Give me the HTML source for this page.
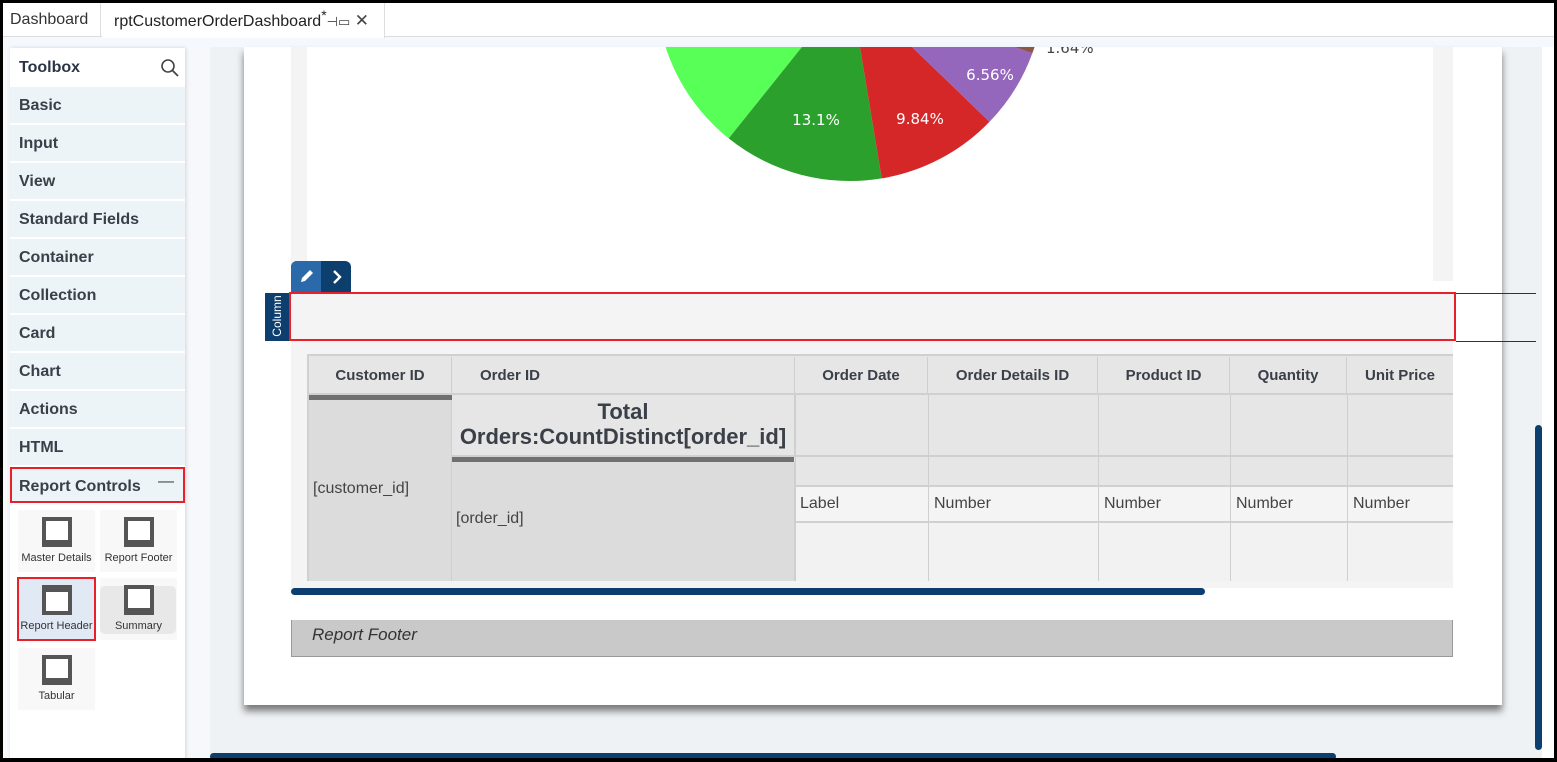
<!DOCTYPE html>
<html><head><meta charset="utf-8"><style>
*{box-sizing:border-box;margin:0;padding:0}
body{width:1557px;height:762px;overflow:hidden;background:#000;font-family:"Liberation Sans",sans-serif;position:relative}
.a{position:absolute}
#frame{left:3px;top:3px;width:1551px;height:755px;background:#f6f8fc;overflow:hidden}
.tabbar{left:0;top:0;width:1551px;height:34px;background:#fff;border-bottom:1px solid #dcdcdc}
.item{left:7px;width:175px;height:36px;background:#edf4f8;font-size:16px;font-weight:bold;color:#3a3f48;padding:10px 0 0 9px}
.tile{width:77px;height:62px;background:#f8f8f8;font-size:11px;color:#333;text-align:center}
.tile .ic{width:30px;height:30px;margin:7px auto 5px;background:#fff;border:4px solid #555;border-bottom-width:7px}
.th{font-size:15px;font-weight:bold;color:#3a3f48;text-align:center;line-height:38px;top:354px;height:38px;background:#e6e6e6;border-right:1px solid #cfcfcf;border-bottom:2px solid #d0d0d0}
.c{border-right:1px solid #cfcfcf;border-bottom:2px solid #d0d0d0}
.num{font-size:16px;color:#444;padding:8px 0 0 5px}
</style></head><body>
<div id="frame" class="a">
 <div class="a tabbar">
  <div class="a" style="left:0;top:0;width:98px;height:34px;border-right:1px solid #ddd;font-size:16px;color:#333;padding:8px 0 0 7px">Dashboard</div>
  <div class="a" style="left:99px;top:0;width:283px;height:35px;background:#fff;border-right:1px solid #ddd;font-size:16px;color:#222;padding:8px 0 0 12px">rptCustomerOrderDashboard<span style="position:relative;top:-6px;font-size:14px">*</span><span style="font-size:13px;color:#444">⊣▭</span> <span style="font-size:17px;color:#444">✕</span></div>
 </div>
 <div class="a" style="left:0;top:35px;width:1551px;height:9px;background:#f5f8fd"></div>
 <!-- sidebar -->
 <div class="a" style="left:7px;top:45px;width:175px;height:720px;background:#fff;box-shadow:1px 0 4px rgba(0,0,0,.15)"></div>
 <div class="a" style="left:16px;top:56px;font-size:16px;font-weight:bold;color:#2c3446">Toolbox</div>
 <svg class="a" style="left:157px;top:55px" width="20" height="20"><circle cx="8" cy="8" r="6" fill="none" stroke="#444" stroke-width="1.6"/><line x1="12.5" y1="12.5" x2="18" y2="18" stroke="#444" stroke-width="1.8"/></svg>
 <div class="a item" style="top:84px">Basic</div>
 <div class="a item" style="top:122px">Input</div>
 <div class="a item" style="top:160px">View</div>
 <div class="a item" style="top:198px">Standard Fields</div>
 <div class="a item" style="top:236px">Container</div>
 <div class="a item" style="top:274px">Collection</div>
 <div class="a item" style="top:312px">Card</div>
 <div class="a item" style="top:350px">Chart</div>
 <div class="a item" style="top:388px">Actions</div>
 <div class="a item" style="top:426px">HTML</div>
 <div class="a item" style="top:464px;height:36px;border:2px solid #e8202a;padding:9px 0 0 7px">Report Controls<span style="position:absolute;right:9px;top:4px;font-weight:normal">—</span></div>
 <div class="a tile" style="left:15px;top:507px"><div class="ic"></div>Master Details</div>
 <div class="a tile" style="left:97px;top:507px"><div class="ic"></div>Report Footer</div>
 <div class="a tile" style="left:15px;top:575px;background:#e1e9f5;border:2px solid #e8202a;width:79px;height:64px;margin:-1px 0 0 -1px"><div class="ic" style="margin-top:6px;border-width:7px 4px 4px"></div>Report Header</div>
 <div class="a tile" style="left:97px;top:575px"><div style="position:absolute;left:0;top:8px;width:76px;height:48px;background:#e8e8e8;border-radius:5px"></div><div class="ic" style="position:relative"></div><span style="position:relative">Summary</span></div>
 <div class="a tile" style="left:15px;top:645px"><div class="ic"></div>Tabular</div>
 <!-- canvas -->
 <div class="a" style="left:207px;top:44px;width:1332px;height:720px;background:#eef2f5"></div>
 <div class="a" style="left:1539px;top:44px;width:12px;height:720px;background:#fff"></div>
 <div class="a" style="left:241px;top:44px;width:1258px;height:658px;background:#fff;box-shadow:0 6px 7px rgba(0,0,0,.5)"></div>
 <div class="a" style="left:288px;top:44px;width:1162px;height:234px;background:#f4f4f4"></div>
 <div class="a" style="left:304px;top:44px;width:1126px;height:234px;background:#fff"></div>
 <svg class="a" style="left:0;top:44px;overflow:hidden" width="1200" height="200" viewBox="0 47 1200 200">
  <g transform="translate(-3,0)">
  <path d="M850 -13 L667.7 -79.4 A194 194 0 0 0 728.7 138.4 Z" fill="#57ff57"/>
  <path d="M850 -13 L728.7 138.4 A194 194 0 0 0 881.7 178.4 Z" fill="#2ca02c"/>
  <path d="M850 -13 L881.7 178.4 A194 194 0 0 0 989.5 121.8 Z" fill="#d62728"/>
  <path d="M850 -13 L989.5 121.8 A194 194 0 0 0 1032.3 53.4 Z" fill="#9467bd"/>
  <path d="M850 -13 L1032.3 53.4 A194 194 0 0 0 1040 28 Z" fill="#8c564b"/>
  <text x="816" y="125" fill="#fff" font-size="15" text-anchor="middle" font-family="DejaVu Sans">13.1%</text>
  <text x="920" y="124" fill="#fff" font-size="15" text-anchor="middle" font-family="DejaVu Sans">9.84%</text>
  <text x="990" y="80" fill="#fff" font-size="15" text-anchor="middle" font-family="DejaVu Sans">6.56%</text>
  <text x="1046" y="53" fill="#444" font-size="15" font-family="DejaVu Sans">1.64%</text>
  </g>
 </svg>
 <!-- edit button -->
 <div class="a" style="left:288px;top:258px;width:60px;height:31px;border-radius:6px 6px 0 0;overflow:hidden;background:#0c3e6e">
  <div class="a" style="left:0;top:0;width:30px;height:31px;background:#2a6aab"></div>
  <svg class="a" style="left:8px;top:7px" width="16" height="16"><path d="M2 14 L3 10 L11 2 L14 5 L6 13 Z" fill="#fff"/></svg>
  <svg class="a" style="left:40px;top:8px" width="12" height="16"><path d="M3 2 L9 8 L3 14" stroke="#fff" stroke-width="2.4" fill="none"/></svg>
 </div>
 <div class="a" style="left:262px;top:290px;width:24px;height:48px;background:#0c3e6e;color:#fff;font-size:12px"><div style="position:absolute;left:-12px;top:16px;width:48px;transform:rotate(-90deg);text-align:center">Column</div></div>
 <div class="a" style="left:286px;top:289px;width:1167px;height:49px;background:#f4f4f4;border:2px solid #e8202a"></div>
 <div class="a" style="left:1453px;top:290px;width:80px;height:1px;background:#333"></div>
 <div class="a" style="left:1453px;top:338px;width:80px;height:1px;background:#333"></div>
 <!-- table -->
 <div class="a" style="left:288px;top:338px;width:1162px;height:247px;background:#f4f4f4"></div>
 <div class="a" style="left:304px;top:351px;width:1146px;height:227px;background:#e6e6e6;border:2px solid #d0d0d0;border-right:none;overflow:hidden">
 </div>
 <div class="a th" style="left:306px;width:143px">Customer ID</div>
 <div class="a th" style="left:449px;width:343px;text-align:left;padding-left:28px">Order ID</div>
 <div class="a th" style="left:792px;width:133px">Order Date</div>
 <div class="a th" style="left:925px;width:170px">Order Details ID</div>
 <div class="a th" style="left:1095px;width:132px">Product ID</div>
 <div class="a th" style="left:1227px;width:117px">Quantity</div>
 <div class="a th" style="left:1344px;width:106px;border-right:none">Unit Price</div>
 <div class="a" style="left:306px;top:392px;width:143px;height:5px;background:#707070"></div>
 <div class="a" style="left:306px;top:397px;width:143px;height:181px;background:#dcdcdc;border-right:1px solid #cfcfcf;font-size:16px;color:#444;padding:80px 0 0 4px">[customer_id]</div>
 <div class="a c" style="left:449px;top:392px;width:343px;height:62px;background:#e6e6e6;text-align:center;font-size:22px;font-weight:bold;color:#3a3f48;line-height:25px;padding-top:4px">Total<br>Orders:CountDistinct[order_id]</div>
 <div class="a" style="left:449px;top:454px;width:342px;height:5px;background:#707070"></div>
 <div class="a" style="left:449px;top:459px;width:343px;height:119px;background:#dcdcdc;border-right:1px solid #cfcfcf;font-size:16px;color:#444;padding:48px 0 0 4px">[order_id]</div>
 <div class="a" style="left:792px;top:392px;width:658px;height:62px;border-bottom:2px solid #d0d0d0"></div>
 <div class="a" style="left:792px;top:454px;width:658px;height:30px;border-bottom:2px solid #d0d0d0"></div>
 <div class="a" style="left:792px;top:484px;width:658px;height:94px;background:#f2f2f2"></div>
 <div class="a" style="left:792px;top:484px;width:658px;height:36px;background:#f4f4f4;border-bottom:2px solid #d0d0d0"></div>
 <div class="a" style="left:925px;top:392px;width:1px;height:186px;background:#cfcfcf"></div>
 <div class="a" style="left:1095px;top:392px;width:1px;height:186px;background:#cfcfcf"></div>
 <div class="a" style="left:1227px;top:392px;width:1px;height:186px;background:#cfcfcf"></div>
 <div class="a" style="left:1344px;top:392px;width:1px;height:186px;background:#cfcfcf"></div>
 <div class="a" style="left:792px;top:392px;width:1px;height:186px;background:#cfcfcf"></div>
 <div class="a num" style="left:792px;top:484px">Label</div>
 <div class="a num" style="left:926px;top:484px">Number</div>
 <div class="a num" style="left:1096px;top:484px">Number</div>
 <div class="a num" style="left:1228px;top:484px">Number</div>
 <div class="a num" style="left:1345px;top:484px">Number</div>
 <div class="a" style="left:288px;top:585px;width:914px;height:7px;border-radius:4px;background:#0c3e6e"></div>
 <div class="a" style="left:288px;top:617px;width:1162px;height:37px;background:#c9c9c9;border:1px solid #999;border-top:none;font-size:17px;font-style:italic;color:#333;padding:5px 0 0 20px">Report Footer</div>
 <div class="a" style="left:1532px;top:422px;width:7px;height:325px;border-radius:4px;background:#0c3e6e"></div>
 <div class="a" style="left:207px;top:750px;width:1126px;height:7px;border-radius:4px;background:#0c3e6e"></div>
</div>
</body></html>
